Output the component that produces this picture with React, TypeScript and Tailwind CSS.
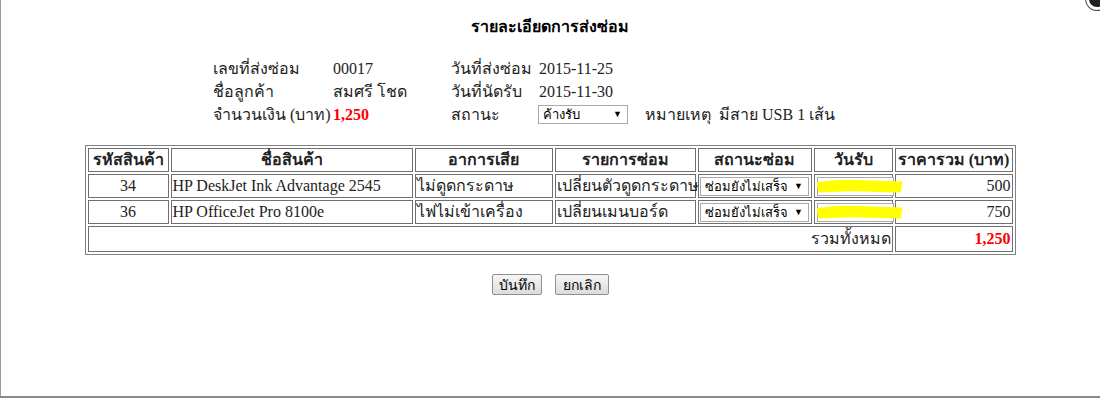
import React from "react";

const serif = { fontFamily: '"Liberation Serif", "Times New Roman", serif' };
const sans = { fontFamily: 'Tahoma, "Liberation Sans", "Noto Sans", sans-serif' };

function Sel({ label, w }: { label: string; w: string }) {
  return (
    <div
      className={`inline-flex items-center justify-between h-[19px] ${w} border border-[#a9a9a9] bg-white pl-[4px] pr-[5px] text-[13px] text-black leading-none`}
      style={sans}
    >
      <span>{label}</span>
      <span className="text-[9px]">▼</span>
    </div>
  );
}

function Highlight() {
  return (
    <div className="relative h-[19px]">
      <div className="absolute left-[1px] top-0 h-[19px] w-[77px] border border-[#a9a9a9] bg-white" />
      <div className="absolute left-[1px] top-[3px] h-[13px] w-[86px] rounded-[3px] bg-[#ffff00] [clip-path:polygon(0_20%,30%_0,100%_15%,98%_100%,40%_90%,2%_100%)]" />
    </div>
  );
}

const th = "border border-[#707070] text-center font-bold text-[16px] h-[24px] px-[1px] py-0 leading-[20px]";
const td = "border border-[#707070] text-[16px] h-[24px] px-[1px] py-0 leading-[20px]";

export default function App() {
  const rows = [
    { id: "34", name: "HP DeskJet Ink Advantage 2545", sym: "ไม่ดูดกระดาษ", fix: "เปลี่ยนตัวดูดกระดาษ", price: "500" },
    { id: "36", name: "HP OfficeJet Pro 8100e", sym: "ไฟไม่เข้าเครื่อง", fix: "เปลี่ยนเมนบอร์ด", price: "750" },
  ];
  return (
    <div className="relative w-[1100px] h-[398px] bg-white overflow-hidden text-[#222]" style={serif}>
      <div className="absolute left-0 top-0 bottom-0 w-[1px] bg-[#9a9a9a]" />
      <div className="absolute left-0 right-0 bottom-0 h-[2px] bg-[#8a8a8a]" />
      <div className="absolute right-[-8px] top-[-12px] w-[22px] h-[22px] rounded-full bg-[#222] border-[3px] border-white shadow-[0_0_0_1px_#444]" />

      <div className="flex flex-col items-center pt-[17px]">
        <div className="text-[16px] font-bold leading-[20px] text-black">รายละเอียดการส่งซ่อม</div>

        <div className="mt-[20px] self-start ml-[213px] flex flex-col text-[16px] leading-[23px] text-[#222]">
          <div className="flex">
            <div className="w-[120px]">เลขที่ส่งซ่อม</div>
            <div className="w-[118px]">00017</div>
            <div className="w-[88px]">วันที่ส่งซ่อม</div>
            <div>2015-11-25</div>
          </div>
          <div className="flex">
            <div className="w-[120px]">ชื่อลูกค้า</div>
            <div className="w-[118px]">สมศรี โชด</div>
            <div className="w-[88px]">วันที่นัดรับ</div>
            <div>2015-11-30</div>
          </div>
          <div className="flex items-center">
            <div className="w-[120px]">จำนวนเงิน (บาท)</div>
            <div className="w-[118px] font-bold text-[#ff0000]">1,250</div>
            <div className="w-[87px]">สถานะ</div>
            <Sel label="ค้างรับ" w="w-[90px]" />
            <div className="ml-[17px]">หมายเหตุ</div>
            <div className="ml-[8px]">มีสาย USB 1 เส้น</div>
          </div>
        </div>

        <table
          className="mt-[19px] w-[929px] table-fixed border-separate border border-[#808080] text-[#222]"
          style={{ borderSpacing: "2px" }}
        >
          <colgroup>
            <col className="w-[81px]" />
            <col className="w-[242px]" />
            <col className="w-[138px]" />
            <col className="w-[141px]" />
            <col className="w-[114px]" />
            <col className="w-[79px]" />
            <col className="w-[118px]" />
          </colgroup>
          <thead>
            <tr>
              <th className={th}>รหัสสินค้า</th>
              <th className={th}>ชื่อสินค้า</th>
              <th className={th}>อาการเสีย</th>
              <th className={th}>รายการซ่อม</th>
              <th className={th}>สถานะซ่อม</th>
              <th className={th}>วันรับ</th>
              <th className={th}>ราคารวม (บาท)</th>
            </tr>
          </thead>
          <tbody>
            {rows.map((r) => (
              <tr key={r.id}>
                <td className={`${td} text-center`}>{r.id}</td>
                <td className={`${td} whitespace-nowrap`}>{r.name}</td>
                <td className={`${td} whitespace-nowrap`}>{r.sym}</td>
                <td className={`${td} whitespace-nowrap`}>{r.fix}</td>
                <td className={`${td} text-center`}>
                  <Sel label="ซ่อมยังไม่เสร็จ" w="w-[109px]" />
                </td>
                <td className={`${td} overflow-visible`}>
                  <Highlight />
                </td>
                <td className={`${td} text-right`}>{r.price}</td>
              </tr>
            ))}
            <tr>
              <td colSpan={6} className={`${td} text-right h-[26px]`}>รวมทั้งหมด</td>
              <td className={`${td} text-right font-bold text-[#ff0000] h-[26px]`}>1,250</td>
            </tr>
          </tbody>
        </table>

        <div className="mt-[19px] flex gap-[13px]" style={sans}>
          <button className="h-[21px] w-[50px] border border-[#8f8f8f] rounded-[2px] bg-gradient-to-b from-[#f6f6f6] to-[#dcdcdc] text-[14px] leading-none text-black">บันทึก</button>
          <button className="h-[21px] w-[54px] border border-[#8f8f8f] rounded-[2px] bg-gradient-to-b from-[#f6f6f6] to-[#dcdcdc] text-[14px] leading-none text-black">ยกเลิก</button>
        </div>
      </div>
    </div>
  );
}
